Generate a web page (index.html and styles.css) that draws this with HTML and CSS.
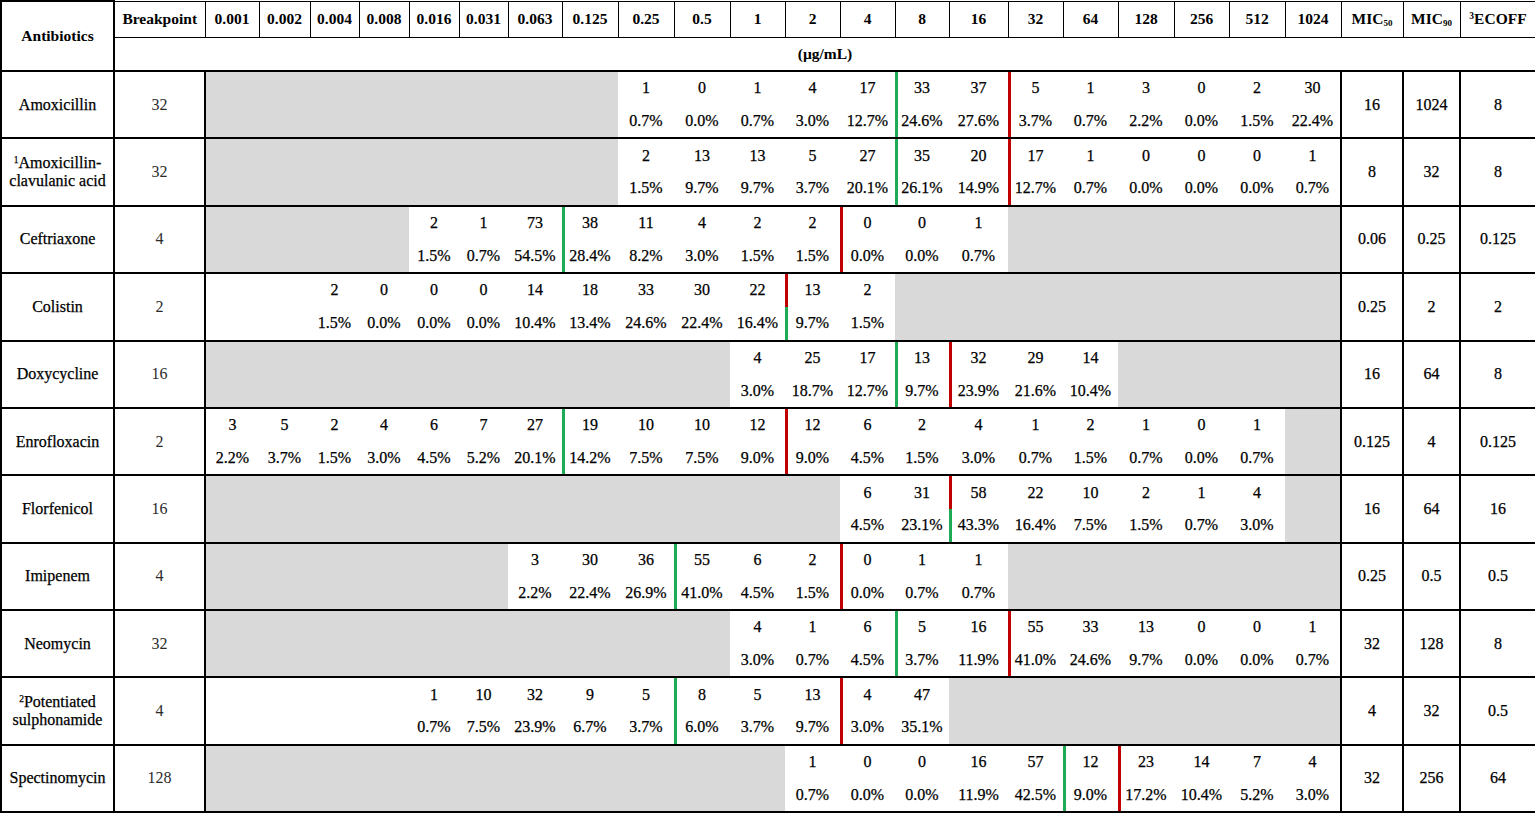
FILE: index.html
```html
<!DOCTYPE html>
<html lang="en">
<head>
<meta charset="utf-8">
<title>MIC distribution</title>
<link rel="stylesheet" href="styles.css">
</head>
<body>
<table class="mic">
<colgroup>
<col style="width:113px"><col style="width:91px">
<col style="width:54px"><col style="width:51px"><col style="width:49px"><col style="width:50px"><col style="width:50px"><col style="width:49px"><col style="width:54px"><col style="width:56px"><col style="width:56px"><col style="width:56px"><col style="width:55px"><col style="width:55px"><col style="width:55px"><col style="width:54px"><col style="width:59px"><col style="width:55px"><col style="width:55px"><col style="width:56px"><col style="width:55px"><col style="width:56px"><col style="width:56px">
<col style="width:62px"><col style="width:57px"><col style="width:76px">
</colgroup>
<thead>
<tr class="h1">
<th class="ab" rowspan="2">Antibiotics</th>
<th>Breakpoint</th>
<th>0.001</th><th>0.002</th><th>0.004</th><th>0.008</th><th>0.016</th><th>0.031</th><th>0.063</th><th>0.125</th><th>0.25</th><th>0.5</th><th>1</th><th>2</th><th>4</th><th>8</th><th>16</th><th>32</th><th>64</th><th>128</th><th>256</th><th>512</th><th>1024</th>
<th>MIC<sub>50</sub></th><th>MIC<sub>90</sub></th><th><sup>3</sup>ECOFF</th>
</tr>
<tr class="h2"><th colspan="25">(µg/mL)</th></tr>
</thead>
<tbody>
<tr class="c">
<td class="nm" rowspan="2">Amoxicillin</td><td class="bp" rowspan="2">32</td>
<td class="gr" colspan="8" rowspan="2"></td>
<td>1</td><td>0</td><td>1</td><td>4</td><td>17</td><td class="g">33</td><td>37</td><td class="r">5</td><td>1</td><td>3</td><td>0</td><td>2</td><td>30</td>
<td class="mv" rowspan="2">16</td><td class="mv" rowspan="2">1024</td><td class="mv" rowspan="2">8</td>
</tr>
<tr class="p"><td>0.7%</td><td>0.0%</td><td>0.7%</td><td>3.0%</td><td>12.7%</td><td class="g">24.6%</td><td>27.6%</td><td class="r">3.7%</td><td>0.7%</td><td>2.2%</td><td>0.0%</td><td>1.5%</td><td>22.4%</td></tr>

<tr class="c">
<td class="nm" rowspan="2"><sup>1</sup>Amoxicillin-<br>clavulanic acid</td><td class="bp" rowspan="2">32</td>
<td class="gr" colspan="8" rowspan="2"></td>
<td>2</td><td>13</td><td>13</td><td>5</td><td>27</td><td class="g">35</td><td>20</td><td class="r">17</td><td>1</td><td>0</td><td>0</td><td>0</td><td>1</td>
<td class="mv" rowspan="2">8</td><td class="mv" rowspan="2">32</td><td class="mv" rowspan="2">8</td>
</tr>
<tr class="p"><td>1.5%</td><td>9.7%</td><td>9.7%</td><td>3.7%</td><td>20.1%</td><td class="g">26.1%</td><td>14.9%</td><td class="r">12.7%</td><td>0.7%</td><td>0.0%</td><td>0.0%</td><td>0.0%</td><td>0.7%</td></tr>

<tr class="c">
<td class="nm" rowspan="2">Ceftriaxone</td><td class="bp" rowspan="2">4</td>
<td class="gr" colspan="4" rowspan="2"></td>
<td>2</td><td>1</td><td>73</td><td class="g">38</td><td>11</td><td>4</td><td>2</td><td>2</td><td class="r">0</td><td>0</td><td>1</td>
<td class="gr" colspan="6" rowspan="2"></td>
<td class="mv" rowspan="2">0.06</td><td class="mv" rowspan="2">0.25</td><td class="mv" rowspan="2">0.125</td>
</tr>
<tr class="p"><td>1.5%</td><td>0.7%</td><td>54.5%</td><td class="g">28.4%</td><td>8.2%</td><td>3.0%</td><td>1.5%</td><td>1.5%</td><td class="r">0.0%</td><td>0.0%</td><td>0.7%</td></tr>

<tr class="c">
<td class="nm" rowspan="2">Colistin</td><td class="bp" rowspan="2">2</td>
<td class="bl" colspan="2" rowspan="2"></td>
<td>2</td><td>0</td><td>0</td><td>0</td><td>14</td><td>18</td><td>33</td><td>30</td><td>22</td><td class="r">13</td><td>2</td>
<td class="gr" colspan="8" rowspan="2"></td>
<td class="mv" rowspan="2">0.25</td><td class="mv" rowspan="2">2</td><td class="mv" rowspan="2">2</td>
</tr>
<tr class="p"><td>1.5%</td><td>0.0%</td><td>0.0%</td><td>0.0%</td><td>10.4%</td><td>13.4%</td><td>24.6%</td><td>22.4%</td><td>16.4%</td><td class="g">9.7%</td><td>1.5%</td></tr>

<tr class="c">
<td class="nm" rowspan="2">Doxycycline</td><td class="bp" rowspan="2">16</td>
<td class="gr" colspan="10" rowspan="2"></td>
<td>4</td><td>25</td><td>17</td><td class="g">13</td><td class="r">32</td><td>29</td><td>14</td>
<td class="gr" colspan="4" rowspan="2"></td>
<td class="mv" rowspan="2">16</td><td class="mv" rowspan="2">64</td><td class="mv" rowspan="2">8</td>
</tr>
<tr class="p"><td>3.0%</td><td>18.7%</td><td>12.7%</td><td class="g">9.7%</td><td class="r">23.9%</td><td>21.6%</td><td>10.4%</td></tr>

<tr class="c">
<td class="nm" rowspan="2">Enrofloxacin</td><td class="bp" rowspan="2">2</td>
<td>3</td><td>5</td><td>2</td><td>4</td><td>6</td><td>7</td><td>27</td><td class="g">19</td><td>10</td><td>10</td><td>12</td><td class="r">12</td><td>6</td><td>2</td><td>4</td><td>1</td><td>2</td><td>1</td><td>0</td><td>1</td>
<td class="gr" rowspan="2"></td>
<td class="mv" rowspan="2">0.125</td><td class="mv" rowspan="2">4</td><td class="mv" rowspan="2">0.125</td>
</tr>
<tr class="p"><td>2.2%</td><td>3.7%</td><td>1.5%</td><td>3.0%</td><td>4.5%</td><td>5.2%</td><td>20.1%</td><td class="g">14.2%</td><td>7.5%</td><td>7.5%</td><td>9.0%</td><td class="r">9.0%</td><td>4.5%</td><td>1.5%</td><td>3.0%</td><td>0.7%</td><td>1.5%</td><td>0.7%</td><td>0.0%</td><td>0.7%</td></tr>

<tr class="c">
<td class="nm" rowspan="2">Florfenicol</td><td class="bp" rowspan="2">16</td>
<td class="gr" colspan="12" rowspan="2"></td>
<td>6</td><td>31</td><td class="r">58</td><td>22</td><td>10</td><td>2</td><td>1</td><td>4</td>
<td class="gr" rowspan="2"></td>
<td class="mv" rowspan="2">16</td><td class="mv" rowspan="2">64</td><td class="mv" rowspan="2">16</td>
</tr>
<tr class="p"><td>4.5%</td><td>23.1%</td><td class="g">43.3%</td><td>16.4%</td><td>7.5%</td><td>1.5%</td><td>0.7%</td><td>3.0%</td></tr>

<tr class="c">
<td class="nm" rowspan="2">Imipenem</td><td class="bp" rowspan="2">4</td>
<td class="gr" colspan="6" rowspan="2"></td>
<td>3</td><td>30</td><td>36</td><td class="g">55</td><td>6</td><td>2</td><td class="r">0</td><td>1</td><td>1</td>
<td class="gr" colspan="6" rowspan="2"></td>
<td class="mv" rowspan="2">0.25</td><td class="mv" rowspan="2">0.5</td><td class="mv" rowspan="2">0.5</td>
</tr>
<tr class="p"><td>2.2%</td><td>22.4%</td><td>26.9%</td><td class="g">41.0%</td><td>4.5%</td><td>1.5%</td><td class="r">0.0%</td><td>0.7%</td><td>0.7%</td></tr>

<tr class="c">
<td class="nm" rowspan="2">Neomycin</td><td class="bp" rowspan="2">32</td>
<td class="gr" colspan="10" rowspan="2"></td>
<td>4</td><td>1</td><td>6</td><td class="g">5</td><td>16</td><td class="r">55</td><td>33</td><td>13</td><td>0</td><td>0</td><td>1</td>
<td class="mv" rowspan="2">32</td><td class="mv" rowspan="2">128</td><td class="mv" rowspan="2">8</td>
</tr>
<tr class="p"><td>3.0%</td><td>0.7%</td><td>4.5%</td><td class="g">3.7%</td><td>11.9%</td><td class="r">41.0%</td><td>24.6%</td><td>9.7%</td><td>0.0%</td><td>0.0%</td><td>0.7%</td></tr>

<tr class="c">
<td class="nm" rowspan="2"><sup>2</sup>Potentiated<br>sulphonamide</td><td class="bp" rowspan="2">4</td>
<td class="bl" colspan="4" rowspan="2"></td>
<td>1</td><td>10</td><td>32</td><td>9</td><td>5</td><td class="g">8</td><td>5</td><td>13</td><td class="r">4</td><td>47</td>
<td class="gr" colspan="7" rowspan="2"></td>
<td class="mv" rowspan="2">4</td><td class="mv" rowspan="2">32</td><td class="mv" rowspan="2">0.5</td>
</tr>
<tr class="p"><td>0.7%</td><td>7.5%</td><td>23.9%</td><td>6.7%</td><td>3.7%</td><td class="g">6.0%</td><td>3.7%</td><td>9.7%</td><td class="r">3.0%</td><td>35.1%</td></tr>

<tr class="c">
<td class="nm" rowspan="2">Spectinomycin</td><td class="bp" rowspan="2">128</td>
<td class="gr" colspan="11" rowspan="2"></td>
<td>1</td><td>0</td><td>0</td><td>16</td><td>57</td><td class="g">12</td><td class="r">23</td><td>14</td><td>7</td><td>4</td>
<td class="mv" rowspan="2">32</td><td class="mv" rowspan="2">256</td><td class="mv" rowspan="2">64</td>
</tr>
<tr class="p"><td>0.7%</td><td>0.0%</td><td>0.0%</td><td>11.9%</td><td>42.5%</td><td class="g">9.0%</td><td class="r">17.2%</td><td>10.4%</td><td>5.2%</td><td>3.0%</td></tr>
</tbody>
</table>
</body>
</html>
```

FILE: styles.css
```css
html, body {
  margin: 0;
  padding: 0;
  background: #ffffff;
}

body {
  font-family: "Liberation Serif", "Times New Roman", serif;
  color: #000000;
}

.mic {
  border-collapse: collapse;
  table-layout: fixed;
  width: 1535px;
}

.mic th,
.mic td {
  padding: 0;
  text-align: center;
  vertical-align: middle;
  font-size: 16px;
  line-height: 18px;
  white-space: nowrap;
  -webkit-text-stroke: 0.25px #000000;
}

.mic thead th {
  font-weight: bold;
  font-size: 15.5px;
  border: 1px solid #000000;
  -webkit-text-stroke: 0;
}

.mic thead .ab {
  border: 2px solid #000000;
}

.mic .h1 {
  height: 36px;
}

.mic .h2 {
  height: 34px;
}

.mic .h2 th {
  border-bottom: 2px solid #000000;
  border-right: 2px solid #000000;
}

.mic sub {
  font-size: 9px;
  vertical-align: -2px;
  line-height: 0;
}

.mic sup {
  font-size: 9.5px;
  vertical-align: 5px;
  line-height: 0;
}

.mic tr.c,
.mic tr.p {
  height: 33.7px;
}

.mic tr.c td {
  border-top: 2px solid #000000;
}

.mic tr.p td {
  border-bottom: 2px solid #000000;
}

.mic td.nm,
.mic td.bp,
.mic td.mv {
  border: 2px solid #000000;
  white-space: normal;
}

.mic td.nm {
  font-size: 16px;
  line-height: 18px;
}

.mic td.bp {
  color: #2a2a2a;
  -webkit-text-stroke: 0;
}

.mic td.mv {
  font-size: 16px;
}

.mic td.gr {
  background: #d9d9d9;
  border-top: 2px solid #000000;
  border-bottom: 2px solid #000000;
}

.mic td.bl {
  border-top: 2px solid #000000;
  border-bottom: 2px solid #000000;
}

.mic td.g {
  box-shadow: inset 3px 0 0 #1dab55;
}

.mic td.r {
  box-shadow: inset 3px 0 0 #c00000;
}
```
